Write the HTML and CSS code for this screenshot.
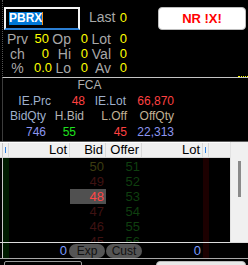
FILE: index.html
```html
<!DOCTYPE html>
<html lang="en">
<head>
    <meta charset="UTF-8">
    <title>PBRX</title>
    <link rel="stylesheet" href="styles.css">
</head>
<body>
<div class="quote">
    <div class="sym"><span class="sel">PBRX</span><span class="caret"></span></div>
    <span class="lb top">Last</span>
    <span class="v top">0</span>
    <div class="nr">NR !X!</div>

    <span class="lb first">Prv</span><span class="v">50</span>
    <span class="lb">Op</span><span class="v">0</span>
    <span class="lb">Lot</span><span class="v">0</span>

    <span class="lb first">ch</span><span class="v">0</span>
    <span class="lb">Hi</span><span class="v">0</span>
    <span class="lb">Val</span><span class="v">0</span>

    <span class="lb first">%</span><span class="v">0.0</span>
    <span class="lb">Lo</span><span class="v">0</span>
    <span class="lb">Av</span><span class="v">0</span>

    <div class="mark"></div>
</div>

<div class="fca">
    <span class="title">FCA</span>

    <span class="bl pr1">IE.Prc</span>
    <span class="red pr3">48</span>
    <span class="bl pr4">IE.Lot</span>
    <span class="red pr2">66,870</span>

    <span class="bl pr6">BidQty</span>
    <span class="gr pr4">H.Bid</span>
    <span class="tan pr3">L.Off</span>
    <span class="tan pr2">OffQty</span>

    <span class="blue pr6">746</span>
    <span class="green pr12">55</span>
    <span class="red pr3">45</span>
    <span class="blue pr2">22,313</span>
</div>

<div class="book">
    <div class="pane">
        <div class="head">
            <span class="h edge"></span>
            <span class="h tick"><i></i></span>
            <span class="h lot">Lot</span>
            <span class="h px">Bid</span>
            <span class="h px">Offer</span>
            <span class="h lot">Lot</span>
            <span class="h tick"><i></i></span>
            <span class="h fill"></span>
        </div>
        <div class="rows">
            <div class="col edge"></div>
            <div class="col buy"></div>
            <div class="col lot"></div>
            <div class="col px">
                <span class="cell far">50</span>
                <span class="cell dim">49</span>
                <span class="cell best">48</span>
                <span class="cell dim">47</span>
                <span class="cell dim">46</span>
                <span class="cell dim">45</span>
            </div>
            <div class="col px">
                <span class="cell ask">51</span>
                <span class="cell ask">52</span>
                <span class="cell ask">53</span>
                <span class="cell ask">54</span>
                <span class="cell ask">55</span>
                <span class="cell ask">56</span>
            </div>
            <div class="col lot"></div>
            <div class="col sell"></div>
            <div class="col fill"></div>
        </div>
    </div>
    <div class="scroll"><div class="thumb"></div></div>
</div>

<div class="foot">
    <span class="edge"></span>
    <span class="buy"></span>
    <span class="qty">0</span>
    <span class="pill">Exp</span>
    <span class="pill">Cust</span>
    <span class="qty">0</span>
    <span class="sell"></span>
</div>

<div class="next">
    <div class="ghost"></div>
    <div class="ghost-nr"></div>
</div>
</body>
</html>
```

FILE: styles.css
```css
*{margin: 0; padding: 0;}
body{
    background: #000;
    width: 248px;
    height: 265px;
    overflow: hidden;
    font-family: "Liberation Sans", Arial, sans-serif;
    font-size: 13px;
}

/* top quote block */
.quote{
    height: 78px;
    box-sizing: border-box;
    margin-left: 2px;
    padding: 7px 0 0 1px;
    border-left: 1px dotted #555;
    border-bottom: 1px solid #c4c4c4;
    display: grid;
    grid-template-columns: 30px 16px 22px 17px 23px 16px 30px 88px;
    grid-template-rows: 25px 14.5px 14.5px 14.5px;
    line-height: 14.5px;
    color: #a8a8a8;
}
.sym{
    grid-column: 1 / span 4;
    width: 76px;
    height: 23px;
    box-sizing: border-box;
    border: 2px solid #f4f4f4;
    border-bottom-color: #2b7fd4;
    padding-left: 3px;
    display: flex;
    align-items: center;
}
.sel{
    background: #0078d7;
    color: #fff;
    font-weight: bold;
    font-size: 12px;
    line-height: 13px;
}
.caret{
    width: 1px;
    height: 13px;
    background: #f7941d;
}
.lb{ font-size: 14px; text-align: right; padding-right: 1px; white-space: nowrap; }
.lb.first{ grid-column: 1; text-align: center; padding-right: 3px; }
.v{ color: #ff0; text-align: right; padding-right: 1px; }
.top{ line-height: 21px; }
.nr{
    grid-column: 8;
    height: 23px;
    box-sizing: border-box;
    background: #fff;
    border: 1px solid #bdbdbd;
    border-radius: 4px;
    color: #f00;
    font-weight: bold;
    text-align: center;
    line-height: 21px;
}
.mark{
    grid-column: 8;
    grid-row: 4;
    justify-self: end;
    align-self: end;
    width: 10px;
    margin: 0 -2px -1px 0;
    border-top: 1px dotted #ff0;
}

/* FCA block */
.fca{
    height: 63px;
    margin-left: 2px;
    border-left: 1px solid #3c3c3c;
    display: grid;
    grid-template-columns: 49px 36px 42px 46px;
    grid-template-rows: repeat(4, 15.5px);
    font-size: 12px;
    line-height: 15.5px;
    text-align: right;
}
.fca .title{ grid-column: 1 / -1; text-align: center; color: #b0b0b0; }
.bl{ color: #9fb0cc; }
.gr{ color: #b4b4b4; }
.tan{ color: #c2b294; }
.red{ color: #ff4040; }
.blue{ color: #8c96f0; }
.green{ color: #1ee11e; }
.pr1{ padding-right: 1px; }
.pr2{ padding-right: 2px; }
.pr3{ padding-right: 3px; }
.pr4{ padding-right: 4px; }
.pr6{ padding-right: 6px; }
.pr12{ padding-right: 12px; }

/* order book */
.book{
    display: flex;
    height: 101px;
    box-sizing: border-box;
    border-top: 1px solid #5c5c5c;
}
.pane{
    width: 230px;
    display: flex;
    flex-direction: column;
}
.head{
    display: flex;
    height: 16px;
    box-sizing: border-box;
    background: #f0f0f0;
    border-top: 1px solid #fff;
    border-bottom: 1px solid #d5d5d5;
}
.h{
    box-sizing: border-box;
    border-right: 1px solid #d9d9d9;
    line-height: 14px;
    color: #000;
    text-align: right;
    padding-right: 2px;
}
.h.edge{ border-right: 1px solid #c8c8c8; }
.h.fill{ border-right: 0; }
.h i{
    display: block;
    width: 1px;
    height: 6px;
    margin: 4px 0 0 2px;
    background: #2d7fe0;
}
.edge{ width: 3px; flex: none; box-sizing: border-box; border-right: 1px solid #c8c8c8; }
.tick, .buy, .sell{ width: 6px; flex: none; }
.lot{ width: 61px; }
.px{ width: 36px; }
.fill{ width: 21px; }
.buy{ background: #001c00; }
.sell{ background: #1c0000; }
.rows{
    display: flex;
    height: 84px;
    overflow: hidden;
}
.col{ box-sizing: border-box; }
.col.px{
    padding-top: 1px;
    text-align: right;
}
.cell{
    display: block;
    height: 15px;
    line-height: 15px;
    padding-right: 2px;
}
.far{ color: #3c3c10; }
.dim{ color: #3e1212; }
.best{ background: #505050; color: #ff4646; }
.ask{ color: #0f3f0f; }
.scroll{
    width: 18px;
    box-sizing: border-box;
    background: #f0f0f0;
    border-left: 1px solid #e2e2e2;
    padding: 19px 0 0 7px;
}
.thumb{
    width: 3px;
    height: 36px;
    background: #8a8a8a;
}

/* footer */
.foot{
    display: flex;
    height: 17px;
    box-sizing: border-box;
    border-top: 1px solid #dcdcdc;
    border-bottom: 1px solid #a8a8a8;
    line-height: 15px;
}
.qty{
    width: 60px;
    box-sizing: border-box;
    padding-right: 2px;
    text-align: right;
    color: #7c9cff;
}
.pill{
    width: 36px;
    height: 14px;
    margin: 1px 1px 0 0;
    background: #555;
    border-radius: 7px;
    color: #111;
    font-size: 12px;
    line-height: 14px;
    text-align: center;
}

.next{
    display: flex;
    padding-top: 2px;
}
.ghost{
    margin-left: 4px;
    width: 76px;
    height: 10px;
    border: 1px solid #9a9a9a;
    border-radius: 2px;
}
.ghost-nr{
    margin: 0 2px 0 auto;
    width: 88px;
    height: 10px;
    background: #e8e8e8;
    border: 1px solid #bbb;
    border-radius: 4px;
}
```
